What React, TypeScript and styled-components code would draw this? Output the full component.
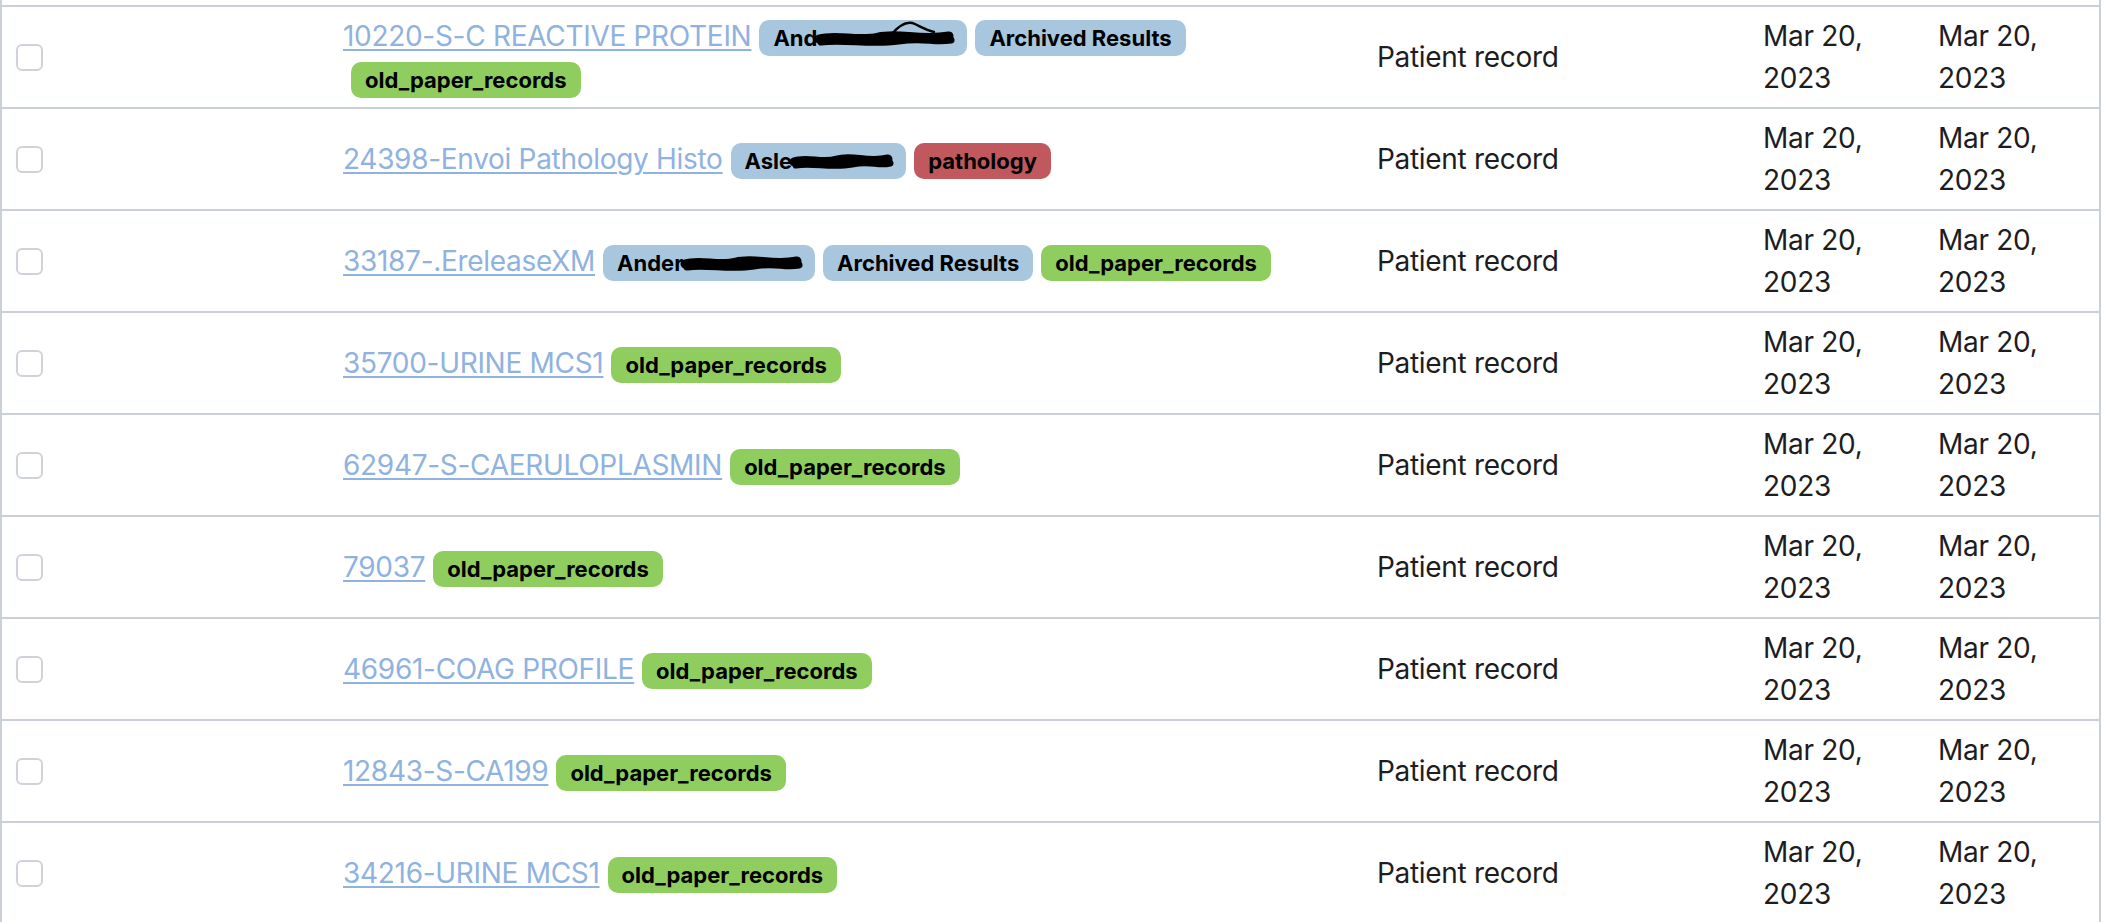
import React from "react";
import styled, { createGlobalStyle } from "styled-components";

const Global = createGlobalStyle`
  html, body { margin: 0; padding: 0; background: #ffffff; }
  body { font-family: Inter, "Noto Sans", "Liberation Sans", sans-serif; color: #1d1d1f; }
`;

const Table = styled.div`
  width: 2101px;
  box-sizing: border-box;
  padding-top: 5px;
  border-left: 2px solid #cbd0d7;
  border-right: 2px solid #cbd0d7;
  height: 922px;
  overflow: hidden;
`;

const Body = styled.div`
  border-top: 2px solid #cbd0d7;
`;

const Row = styled.div`
  display: grid;
  grid-template-columns: 325px 1034px 386px 175px 1fr;
  align-items: center;
  min-height: 100px;
  border-bottom: 2px solid #cbd0d7;
`;

const Cell = styled.div<{ $first?: boolean }>`
  box-sizing: border-box;
  padding: 0 16px 0 ${(p) => (p.$first ? "14px" : "16px")};
  font-size: 28px;
  line-height: 42px;
  letter-spacing: -0.3px;
  color: #1d1d1f;
`;

const Check = styled.span`
  display: block;
  width: 27px;
  height: 27px;
  box-sizing: border-box;
  border: 2px solid #cfd3d9;
  border-radius: 6px;
  background: #fff;
`;

const Link = styled.a`
  color: #8fb2e0;
  text-decoration: underline;
  text-decoration-thickness: 2px;
  text-underline-offset: 3px;
  cursor: pointer;
`;

const badgeColors = {
  blue: "#a8c7de",
  green: "#8fcd5e",
  red: "#c0585e",
};

const Badge = styled.span<{ $kind: keyof typeof badgeColors }>`
  display: inline-block;
  margin-left: 8px;
  padding: 0 14px;
  height: 36px;
  line-height: 36px;
  border-radius: 10px;
  background: ${(p) => badgeColors[p.$kind]};
  color: #000;
  font-size: 22px;
  font-weight: 700;
  letter-spacing: 0;
  vertical-align: middle;
  white-space: nowrap;
`;

const Scribble = styled.svg`
  display: inline-block;
  vertical-align: middle;
  overflow: visible;
  margin-top: -4px;
`;

type Redaction = { width: number; hat?: boolean };

function Redact({ width, hat }: Redaction) {
  const w = width;
  const d = `M2 13 C ${w * 0.15} 8, ${w * 0.3} 16, ${w * 0.45} 11 S ${w * 0.75} 15, ${w - 4} 10`;
  const d2 = `M4 16 C ${w * 0.2} 13, ${w * 0.4} 19, ${w * 0.6} 15 S ${w * 0.85} 17, ${w - 2} 14`;
  return (
    <Scribble width={w} height={24} viewBox={`0 0 ${w} 24`} aria-hidden="true">
      <path d={d} fill="none" stroke="#000" strokeWidth={9} strokeLinecap="round" />
      <path d={d2} fill="none" stroke="#000" strokeWidth={7} strokeLinecap="round" />
      {hat && (
        <path
          d={`M${w * 0.55} 8 C ${w * 0.6} 0, ${w * 0.66} -6, ${w * 0.72} -2 S ${w * 0.8} 4, ${w * 0.86} 6`}
          fill="none"
          stroke="#000"
          strokeWidth={2.5}
          strokeLinecap="round"
        />
      )}
    </Scribble>
  );
}

type Tag = { kind: keyof typeof badgeColors; text: string; redact?: Redaction };

type Record = { name: string; tags: Tag[] };

const oldPaper: Tag = { kind: "green", text: "old_paper_records" };
const archived: Tag = { kind: "blue", text: "Archived Results" };

const records: Record[] = [
  {
    name: "10220-S-C REACTIVE PROTEIN",
    tags: [{ kind: "blue", text: "And", redact: { width: 136, hat: true } }, archived, oldPaper],
  },
  {
    name: "24398-Envoi Pathology Histo",
    tags: [{ kind: "blue", text: "Asle", redact: { width: 100 } }, { kind: "red", text: "pathology" }],
  },
  {
    name: "33187-.EreleaseXM",
    tags: [{ kind: "blue", text: "Ander", redact: { width: 118 } }, archived, oldPaper],
  },
  { name: "35700-URINE MCS1", tags: [oldPaper] },
  { name: "62947-S-CAERULOPLASMIN", tags: [oldPaper] },
  { name: "79037", tags: [oldPaper] },
  { name: "46961-COAG PROFILE", tags: [oldPaper] },
  { name: "12843-S-CA199", tags: [oldPaper] },
  { name: "34216-URINE MCS1", tags: [oldPaper] },
];

export default function App() {
  return (
    <>
      <Global />
      <Table>
        <Body>
          {records.map((r) => (
            <Row key={r.name}>
              <Cell $first>
                <Check />
              </Cell>
              <Cell>
                <Link>{r.name}</Link>
                {r.tags.map((t, i) => (
                  <Badge key={i} $kind={t.kind}>
                    {t.text}
                    {t.redact && <Redact {...t.redact} />}
                  </Badge>
                ))}
              </Cell>
              <Cell>Patient record</Cell>
              <Cell>Mar 20, 2023</Cell>
              <Cell>Mar 20, 2023</Cell>
            </Row>
          ))}
        </Body>
      </Table>
    </>
  );
}
